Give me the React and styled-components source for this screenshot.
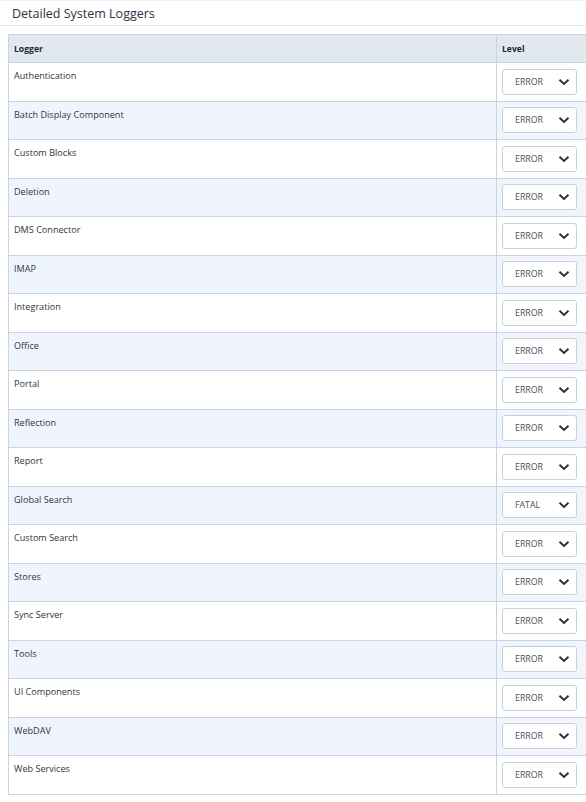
import styled, { createGlobalStyle } from 'styled-components';

const GlobalStyle = createGlobalStyle`
  html, body {
    margin: 0;
    padding: 0;
    background: #ffffff;
    overflow: hidden;
  }
  body {
    font-family: "Open Sans", "Noto Sans", "Liberation Sans", sans-serif;
    color: #333;
  }
`;

const Panel = styled.div`
  width: 586px;
  height: 802px;
  border-top: 1px solid #eef0f3;
  box-sizing: border-box;
`;

const TitleBar = styled.div`
  height: 24px;
  display: flex;
  align-items: center;
  padding-left: 12px;
  border-bottom: 1px solid #e4e8ee;
  font-size: 12.5px;
  color: #2b3440;
`;

const TableWrap = styled.div`
  padding: 8px 0 0 8px;
`;

const Table = styled.table`
  width: 580px;
  border-collapse: collapse;
  table-layout: fixed;
  font-size: 9.1px;
`;

const HeadCell = styled.th`
  background: #e2e8f0;
  border: 1px solid #c8d4e2;
  height: 27px;
  padding: 0 5px;
  text-align: left;
  font-weight: 700;
  font-size: 8.6px;
  color: #1c2838;
  width: ${(p) => p.$w || 'auto'};
`;

const Row = styled.tr`
  background: ${(p) => (p.$alt ? '#f0f5fd' : '#ffffff')};
`;

const NameCell = styled.td`
  border: 1px solid #c8d4e2;
  height: 31.5px;
  padding: 6px 5px 0;
  vertical-align: top;
  color: #2e3642;
`;

const LevelCell = styled.td`
  border: 1px solid #c8d4e2;
  padding: 0 5px;
  vertical-align: middle;
`;

const Select = styled.div`
  width: 75px;
  height: 26px;
  box-sizing: border-box;
  border: 1px solid #cdd1d6;
  border-radius: 3px;
  background: #fff;
  display: flex;
  align-items: center;
  justify-content: space-between;
  padding: 0 6px 0 12px;
  font-size: 8.8px;
  color: #4a4f57;
`;

const Chevron = () => (
  <svg width="12" height="8" viewBox="0 0 12 8">
    <path d="M1.5 1.8 L6 6 L10.5 1.8" fill="none" stroke="#2a2f36" strokeWidth="1.9" />
  </svg>
);

const loggers = [
  ['Authentication', 'ERROR'],
  ['Batch Display Component', 'ERROR'],
  ['Custom Blocks', 'ERROR'],
  ['Deletion', 'ERROR'],
  ['DMS Connector', 'ERROR'],
  ['IMAP', 'ERROR'],
  ['Integration', 'ERROR'],
  ['Office', 'ERROR'],
  ['Portal', 'ERROR'],
  ['Reflection', 'ERROR'],
  ['Report', 'ERROR'],
  ['Global Search', 'FATAL'],
  ['Custom Search', 'ERROR'],
  ['Stores', 'ERROR'],
  ['Sync Server', 'ERROR'],
  ['Tools', 'ERROR'],
  ['UI Components', 'ERROR'],
  ['WebDAV', 'ERROR'],
  ['Web Services', 'ERROR'],
];

export default function App() {
  return (
    <>
      <GlobalStyle />
      <Panel>
        <TitleBar>Detailed System Loggers</TitleBar>
        <TableWrap>
          <Table>
            <thead>
              <tr>
                <HeadCell>Logger</HeadCell>
                <HeadCell $w="80px">Level</HeadCell>
              </tr>
            </thead>
            <tbody>
              {loggers.map(([name, level], i) => (
                <Row key={name} $alt={i % 2 === 1}>
                  <NameCell>{name}</NameCell>
                  <LevelCell>
                    <Select>
                      {level}
                      <Chevron />
                    </Select>
                  </LevelCell>
                </Row>
              ))}
            </tbody>
          </Table>
        </TableWrap>
      </Panel>
    </>
  );
}
